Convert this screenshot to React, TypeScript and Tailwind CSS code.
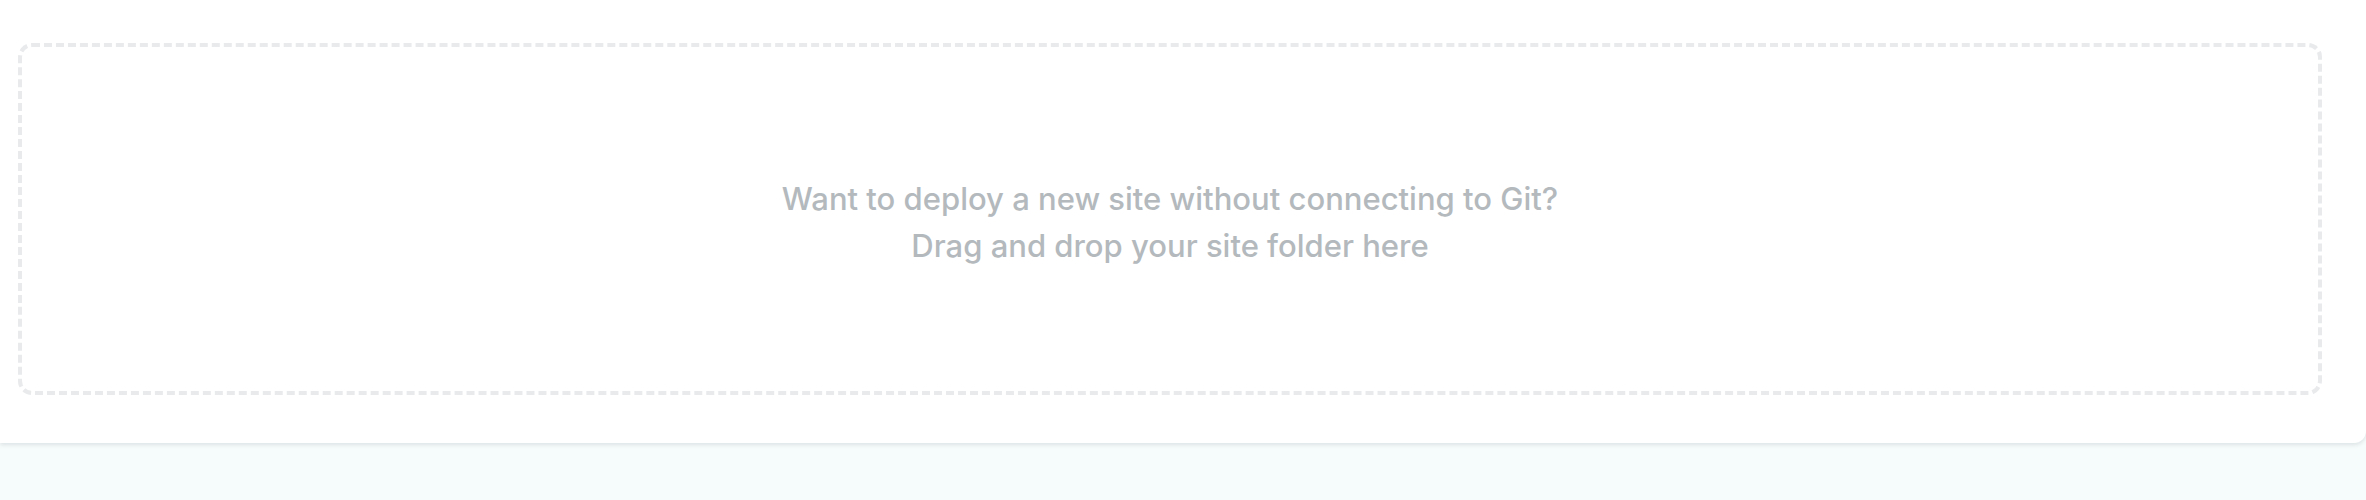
export default function App() {
  return (
    <div className="min-h-[500px] bg-[#f6fbfb]" style={{ fontFamily: "Inter, 'Noto Sans', sans-serif" }}>
      <div className="bg-white rounded-br-[12px] pt-[43px] pl-[18px] pr-[44px] pb-[48px] shadow-[0_2px_4px_rgba(14,30,37,0.10)]">
        <div className="h-[352px] rounded-[14px] border-[4px] border-dashed border-[#e8eaec] flex flex-col items-center justify-center pt-[6px]">
          <p className="text-[31px] font-medium leading-[47px] text-[#b3b9bd] text-center">
            Want to deploy a new site without connecting to Git?
            <br />
            Drag and drop your site folder here
          </p>
        </div>
      </div>
    </div>
  );
}
